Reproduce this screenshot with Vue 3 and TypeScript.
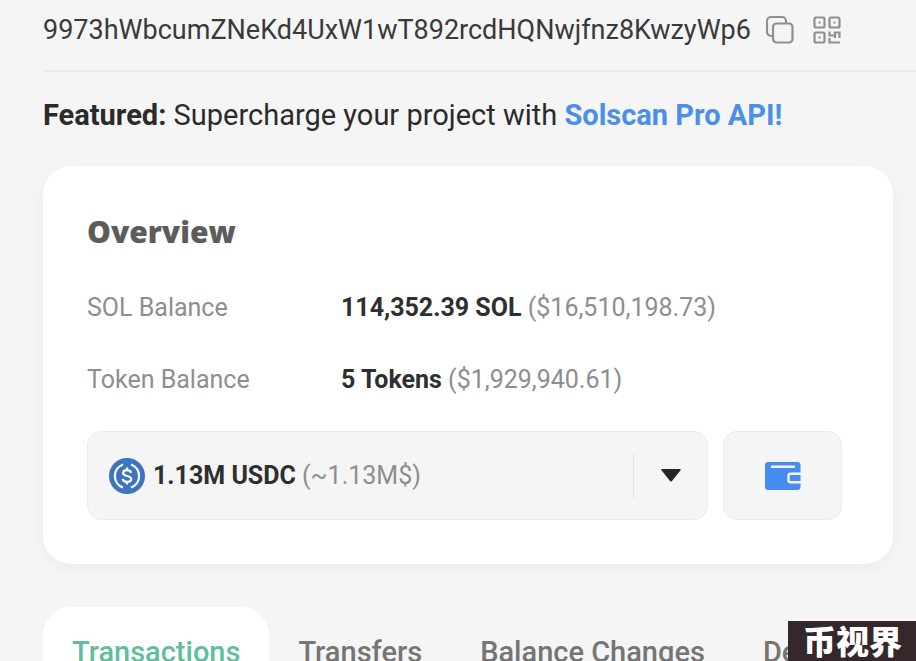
<script setup lang="ts">
import { computed, ref } from 'vue'

interface Balance {
  label: string
  amount: string
  value: string
}

interface Token {
  id: string
  amount: string
  value: string
}

const address = '9973hWbcumZNeKd4UxW1wT892rcdHQNwjfnz8KwzyWp6'

const balances: Balance[] = [
  { label: 'SOL Balance', amount: '114,352.39 SOL', value: '($16,510,198.73)' },
  { label: 'Token Balance', amount: '5 Tokens', value: '($1,929,940.61)' },
]

const tokens: Token[] = [{ id: 'usdc', amount: '1.13M USDC', value: '(~1.13M$)' }]
const selectedId = ref('usdc')
const selected = computed(() => tokens.find((t) => t.id === selectedId.value) ?? tokens[0])

const tabs = ['Transactions', 'Transfers', 'Balance Changes', 'DeFi']
const activeTab = ref('Transactions')

function copyAddress(): void {
  navigator.clipboard?.writeText(address)
}
</script>

<template>
  <main class="page">
    <header class="account">
      <span class="address">{{ address }}</span>
      <button class="icon-button" type="button" aria-label="Copy address" @click="copyAddress">
        <svg width="28" height="28" viewBox="0 0 28 28" fill="none" stroke="#8f8f8f" stroke-width="2.200">
          <path d="M7 20H5a4 4 0 0 1-4-4V5a4 4 0 0 1 4-4h11a4 4 0 0 1 4 4v2" />
          <rect x="7" y="7.500" width="19.500" height="19" rx="3.500" />
        </svg>
      </button>
      <button class="icon-button" type="button" aria-label="Show QR code">
        <svg width="28" height="28" viewBox="0 0 28 28" fill="none" stroke="#8f8f8f" stroke-width="2.200">
          <rect x="1.500" y="1.500" width="10" height="10" rx="1.500" />
          <rect x="16.500" y="1.500" width="10" height="10" rx="1.500" />
          <rect x="1.500" y="16.500" width="10" height="10" rx="1.500" />
          <path d="M5.500 6.500h2M20.500 6.500h2M5.500 21.500h2" />
          <path d="M15.500 19.500h6.500v-3h4.500v5.500M16.500 15.500v3M16.500 22v4.500h10.500M22 19.500v2.500" />
        </svg>
      </button>
    </header>

    <p class="featured">
      <strong>Featured:</strong> Supercharge your project with
      <a class="featured-link" href="#api">Solscan Pro API!</a>
    </p>

    <section class="card" aria-labelledby="overview-title">
      <h2 id="overview-title" class="card-title">Overview</h2>
      <dl class="balances">
        <div v-for="row in balances" :key="row.label" class="balance-row">
          <dt>{{ row.label }}</dt>
          <dd>
            <strong>{{ row.amount }}</strong> {{ row.value }}
          </dd>
        </div>
      </dl>

      <div class="holdings">
        <label class="token-picker">
          <svg class="coin" width="36" height="36" viewBox="0 0 36 36" fill="none" stroke="#fff">
            <circle cx="18" cy="18" r="18" fill="#3e73c4" stroke="none" />
            <path d="M14 6.500a12.200 12.200 0 0 0 0 23M22 6.500a12.200 12.200 0 0 1 0 23" stroke-width="2.300" />
            <path
              d="M22 14.800c-.3-1.900-1.800-2.700-4-2.700-2.400 0-3.900 1.100-3.900 2.900 0 4.300 8.100 1.600 8.100 6 0 1.800-1.600 2.900-4.200 2.900-2.500 0-4-.9-4.300-3M18 9.500v2.800M18 23.700v2.800"
              stroke-width="2.200"
            />
          </svg>
          <span class="token-text">
            <strong>{{ selected.amount }}</strong> {{ selected.value }}
          </span>
          <span class="caret">
            <svg width="20" height="13" viewBox="0 0 20 13" fill="#262626">
              <path d="M1 0h18q1.200.2.500 1.200L11 12q-1 1-2 0L.5 1.200Q-.2.200 1 0Z" />
            </svg>
          </span>
          <select v-model="selectedId" class="token-select" aria-label="Token">
            <option v-for="token in tokens" :key="token.id" :value="token.id">
              {{ token.amount }} {{ token.value }}
            </option>
          </select>
        </label>
        <button class="wallet" type="button" aria-label="Open wallet">
          <svg width="36" height="28" viewBox="0 0 36 28" fill="none">
            <rect width="35.500" height="28" rx="3" fill="#468bf2" />
            <path d="M7 4.800h22" stroke="#f5f5f5" stroke-width="2.400" stroke-linecap="round" />
            <path d="M36 11.700H25.500q-2 0-2 2v4.600q0 2 2 2H36" stroke="#f5f5f5" stroke-width="2.400" />
          </svg>
        </button>
      </div>
    </section>

    <nav class="tabs" aria-label="Account activity">
      <button
        v-for="tab in tabs"
        :key="tab"
        type="button"
        class="tab"
        :class="{ active: tab === activeTab }"
        @click="activeTab = tab"
      >
        {{ tab }}
      </button>
    </nav>

    <div class="badge">币视界</div>
  </main>
</template>

<style>
body {
  background: #f5f5f5;
}
</style>

<style scoped>
.page {
  position: relative;
  box-sizing: border-box;
  height: 100vh;
  overflow: hidden;
  padding-left: 43px;
  background: #f5f5f5;
  color: #2b2b2b;
  font-family: Roboto, "Liberation Sans", sans-serif;
}

button {
  margin: 0;
  border: 0;
  padding: 0;
  background: none;
  font: inherit;
  cursor: pointer;
}

svg {
  display: block;
  flex: none;
}

.account {
  display: flex;
  align-items: center;
  gap: 19px;
  height: 60px;
  padding-bottom: 10px;
  border-bottom: 2px solid #eaeaea;
  color: #3a3a3a;
}

.address {
  margin-right: -4px;
  font-size: 27px;
  line-height: 40px;
}

.featured {
  margin: 23px 0 31px;
  font-size: 29px;
  line-height: 40px;
}

.featured-link {
  color: #4a8fe8;
  font-weight: 700;
  text-decoration: none;
}

.card {
  margin-right: 23px;
  padding: 44px 51px 44px 44px;
  border-radius: 28px;
  background: #fff;
  box-shadow: 0 6px 16px rgb(0 0 0 / 4%);
}

.card-title {
  margin: 0;
  color: #5c5c5c;
  font-family: "Open Sans", Lato, sans-serif;
  font-size: 30px;
  font-weight: 800;
  line-height: 44px;
}

.balances {
  display: grid;
  gap: 32px;
  margin: 34px 0 31px;
}

.balance-row {
  display: grid;
  grid-template-columns: 254px 1fr;
  color: #8e8e8e;
  font-size: 25px;
  line-height: 40px;
}

.balance-row dd {
  margin: 0;
}

.balance-row strong,
.token-text strong {
  color: #2f2f2f;
}

.holdings {
  display: flex;
  gap: 15px;
}

.token-picker,
.wallet {
  box-sizing: border-box;
  height: 89px;
  border: 1px solid #ebebeb;
  border-radius: 14px;
  background: #f5f5f5;
}

.token-picker {
  position: relative;
  display: flex;
  flex: 1;
  align-items: center;
  gap: 8px;
  padding-left: 21px;
}

.token-text {
  flex: 1;
  color: #8e8e8e;
  font-size: 25px;
  line-height: 40px;
}

.caret {
  display: flex;
  align-items: center;
  justify-content: center;
  width: 73px;
  height: 44px;
  border-left: 1px solid #e2e2e2;
}

.token-select {
  position: absolute;
  inset: 0;
  width: 100%;
  opacity: 0;
  cursor: pointer;
}

.wallet {
  display: flex;
  align-items: center;
  justify-content: center;
  width: 119px;
}

.tabs {
  display: flex;
  margin-top: 43px;
}

.tab {
  flex: none;
  height: 90px;
  padding: 0 29px;
  border-radius: 28px 28px 0 0;
  color: #757575;
  font-size: 29px;
  font-weight: 500;
  line-height: 40px;
}

.tab.active {
  background: #fff;
  color: #5fbf9a;
}

.badge {
  position: absolute;
  right: 0;
  bottom: 0;
  box-sizing: border-box;
  width: 128px;
  height: 40px;
  padding-left: 15px;
  background: #35282d;
  color: #fff;
  font-family: "Noto Sans CJK SC", sans-serif;
  font-size: 33px;
  font-weight: 900;
  line-height: 38px;
}
</style>
